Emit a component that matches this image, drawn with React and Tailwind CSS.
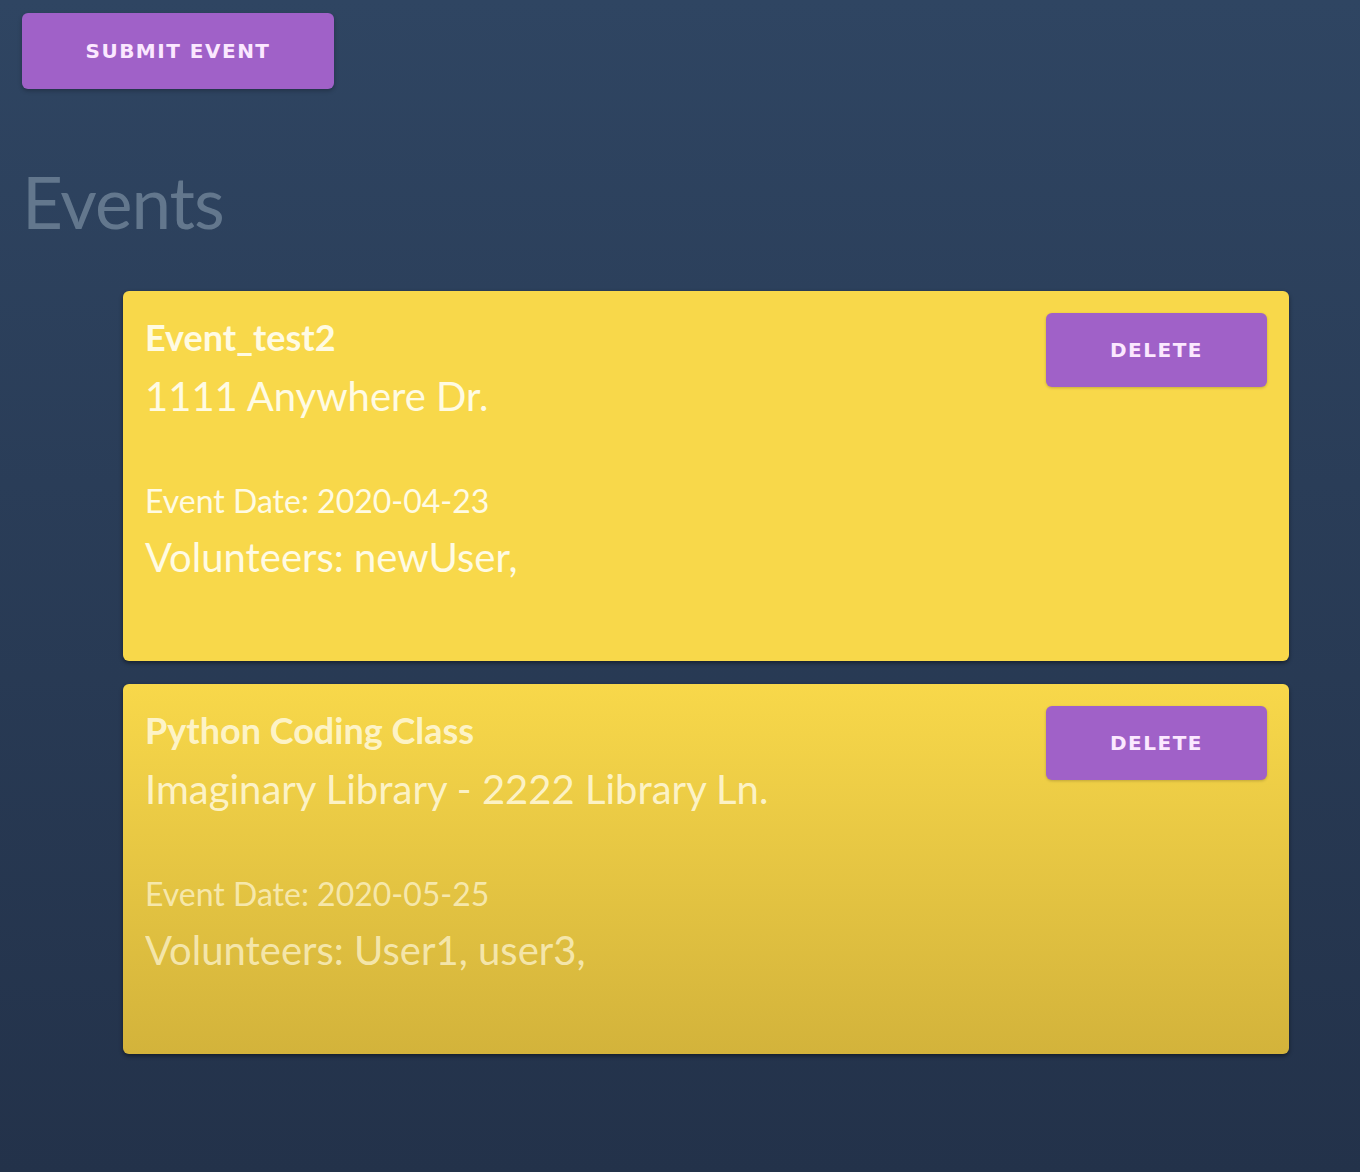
export default function App() {
  const events = [
    {
      title: "Event_test2",
      address: "1111 Anywhere Dr.",
      date: "2020-04-23",
      volunteers: "newUser,",
      second: false,
    },
    {
      title: "Python Coding Class",
      address: "Imaginary Library - 2222 Library Ln.",
      date: "2020-05-25",
      volunteers: "User1, user3,",
      second: true,
    },
  ];
  return (
    <div className="min-h-[1172px] w-[1360px] bg-gradient-to-b from-[#2f4562] to-[#23324a] pt-[13px] pl-[22px] font-['Lato','Open_Sans',sans-serif]">
      <button className="flex h-[76px] w-[312px] items-center justify-center rounded-[6px] bg-[#a061c8] font-['DejaVu_Sans',sans-serif] text-[20px] font-bold tracking-[1.5px] text-[#fbe8ff] shadow-[0_2px_4px_rgba(0,0,0,0.25)]">
        SUBMIT EVENT
      </button>
      <h1 className="mt-[70px] text-[71px] leading-[86px] font-normal tracking-[-1px] text-[#63778d]">
        Events
      </h1>
      <div className="mt-[46px] ml-[101px] flex w-[1166px] flex-col gap-[23px]">
        {events.map((e) => (
          <div
            key={e.title}
            className={
              "flex h-[370px] items-start justify-between rounded-[6px] pl-[22px] pr-[22px] pt-[22px] shadow-[0_2px_4px_rgba(0,0,0,0.45)] " +
              (e.second
                ? "bg-gradient-to-b from-[#f8d84a] to-[#d3b33b]"
                : "bg-[#f8d84a]")
            }
          >
            <div className={"flex flex-col " + (e.second ? "text-[#fff8d8]/90" : "text-[#fffbe3]")}>
              <div className="mt-[2px] text-[36px] leading-[44px] font-bold">{e.title}</div>
              <div className="mt-[13px] text-[40px] leading-[48px]">{e.address}</div>
              <div className={"mt-[62px] text-[32px] leading-[38px] " + (e.second ? "opacity-80" : "")}>
                Event Date: {e.date}
              </div>
              <div className={"mt-[13px] text-[40px] leading-[48px] " + (e.second ? "opacity-80" : "")}>
                Volunteers: {e.volunteers}
              </div>
            </div>
            <button className="flex h-[74px] w-[221px] shrink-0 items-center justify-center rounded-[6px] bg-[#a061c8] font-['DejaVu_Sans',sans-serif] text-[20px] font-bold tracking-[1.5px] text-[#fbe8ff] shadow-[0_1px_3px_rgba(0,0,0,0.2)]">
              DELETE
            </button>
          </div>
        ))}
      </div>
    </div>
  );
}
